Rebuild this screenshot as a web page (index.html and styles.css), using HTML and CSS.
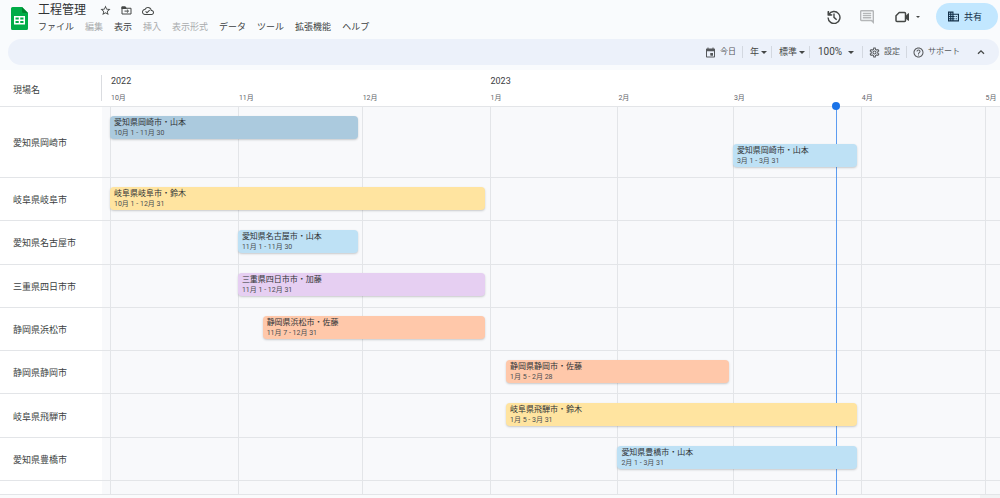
FILE: index.html
```html
<!DOCTYPE html>
<html lang="ja">
<head>
<meta charset="utf-8">
<meta name="viewport" content="width=device-width, initial-scale=1">
<title>工程管理</title>
<link rel="stylesheet" href="styles.css">
</head>
<body>
<header class="header">
  <svg class="logo" viewBox="0 0 17 23" aria-hidden="true">
    <path fill="#00ac47" d="M1.500 0H11l6 6v15.500a1.500 1.500 0 0 1-1.500 1.500h-14A1.500 1.500 0 0 1 0 21.500v-20A1.500 1.500 0 0 1 1.500 0z"/>
    <path fill="#00832d" d="M11 0l6 6h-4.500A1.500 1.500 0 0 1 11 4.500z"/>
    <path fill="#fff" fill-rule="evenodd" d="M3 9h11v8.500H3zM4.500 10.500v2h3.250v-2zM9.250 10.500v2h3.250v-2zM4.500 14v2h3.250v-2zM9.250 14v2h3.250v-2z"/>
  </svg>
  <div class="heading">
    <div class="title-row">
      <h1 class="title">工程管理</h1>
      <button class="icon-button" aria-label="スター"><svg class="icon icon-small" viewBox="1 1 22 22"><path d="M22 9.240l-7.190-.62L12 2 9.190 8.630 2 9.240l5.460 4.730L5.820 21 12 17.270 18.180 21l-1.630-7.030L22 9.240zM12 15.400l-3.760 2.270 1-4.280-3.320-2.880 4.380-.38L12 6.100l1.710 4.040 4.380.38-3.320 2.880 1 4.280L12 15.400z"/></svg></button>
      <button class="icon-button" aria-label="移動"><svg class="icon icon-small" viewBox="1 1 22 22"><path fill="none" stroke="currentColor" stroke-width="2" d="M3 5h6.500l2 2.500H21V19H3zM8 13.200h7.500M12.800 10l3.200 3.200-3.200 3.200"/><path d="M2 4h8l2 3v2H2z"/></svg></button>
      <button class="icon-button" aria-label="保存済み"><svg class="icon icon-cloud" viewBox="0 0 24 24"><path d="M19.350 10.040C18.670 6.590 15.640 4 12 4 9.110 4 6.600 5.640 5.350 8.040 2.340 8.360 0 10.910 0 14c0 3.310 2.690 6 6 6h13c2.760 0 5-2.240 5-5 0-2.640-2.050-4.780-4.650-4.960zM19 18H6c-2.210 0-4-1.790-4-4 0-2.050 1.530-3.760 3.560-3.970l1.070-.11.5-.95C8.080 7.140 9.940 6 12 6c2.620 0 4.880 1.860 5.390 4.430l.3 1.500 1.530.11c1.560.1 2.780 1.410 2.780 2.960 0 1.650-1.350 3-3 3zm-9-3.820l-2.090-2.090L6.500 13.500 10 17l6.010-6.010-1.410-1.410z"/></svg></button>
    </div>
    <nav class="menu">
      <button>ファイル</button>
      <button disabled>編集</button>
      <button>表示</button>
      <button disabled>挿入</button>
      <button disabled>表示形式</button>
      <button>データ</button>
      <button>ツール</button>
      <button>拡張機能</button>
      <button>ヘルプ</button>
    </nav>
  </div>
  <div class="actions">
    <button class="icon-button" aria-label="変更履歴"><svg class="icon icon-large" viewBox="2 2 20 20"><path fill="none" stroke="currentColor" stroke-width="2" d="M4 3.500V9h5.500M4.600 8.500A8.500 8.500 0 1 1 3.500 12.800M12 7v5.500l3.800 3.500"/><path d="M3 4l6 6H3z"/></svg></button>
    <button class="icon-button muted" aria-label="コメント"><svg class="icon icon-large" viewBox="2 2 20 20"><path d="M21.990 4c0-1.100-.89-2-1.990-2H4c-1.100 0-2 .9-2 2v12c0 1.100.9 2 2 2h14l4 4-.01-18zM20 4v13.170L18.830 16H4V4h16zM6 12h12v2H6zm0-3h12v2H6zm0-3h12v2H6z"/></svg></button>
    <button class="meet" aria-label="ビデオ会議"><svg class="icon icon-large" viewBox="0 0 28 28"><path fill="none" stroke="currentColor" stroke-width="3" stroke-linejoin="round" d="M8.500 5H19a2 2 0 0 1 2 2v14a2 2 0 0 1-2 2H4a2 2 0 0 1-2-2v-9.500z"/><path d="M20 13l6.500-6.500H28v15h-1.500L20 16z"/></svg><span class="caret caret-small"></span></button>
    <button class="share"><svg class="icon icon-share" viewBox="2 2 20 20"><path d="M12 7V3H2v18h20V7H12zM6 19H4v-2h2v2zm0-4H4v-2h2v2zm0-4H4V9h2v2zm0-4H4V5h2v2zm4 12H8v-2h2v2zm0-4H8v-2h2v2zm0-4H8V9h2v2zm0-4H8V5h2v2zm10 12h-8v-2h2v-2h-2v-2h2v-2h-2V9h8v10zm-2-8h-2v2h2v-2zm0 4h-2v2h2v-2z"/></svg>共有</button>
  </div>
</header>

<div class="toolbar" role="toolbar" aria-label="タイムライン">
  <button class="tool"><svg class="icon icon-tool" viewBox="1 0 22 22"><path fill-rule="evenodd" d="M19 3h-1V1h-2v2H8V1H6v2H5c-1.110 0-1.990.9-1.990 2L3 19c0 1.100.89 2 2 2h14c1.100 0 2-.9 2-2V5c0-1.100-.9-2-2-2zM5 8.500h14V19H5zM12 12h5v5h-5z"/><path d="M12 12h5v5h-5z"/></svg>今日</button>
  <label class="picker"><select aria-label="期間"><option>年</option><option>月</option><option>週</option></select><span class="caret"></span></label>
  <label class="picker"><select aria-label="表示密度"><option>標準</option></select><span class="caret"></span></label>
  <label class="picker zoom"><select aria-label="ズーム"><option>100%</option><option>75%</option></select><span class="caret"></span></label>
  <button class="tool"><svg class="icon icon-tool" viewBox="1 1 22 22"><path d="M19.430 12.980c.04-.32.07-.64.07-.98 0-.34-.03-.66-.07-.98l2.110-1.650c.19-.15.24-.42.12-.64l-2-3.460c-.09-.16-.26-.25-.44-.25-.06 0-.12.01-.17.03l-2.490 1c-.52-.4-1.080-.73-1.690-.98l-.38-2.650C14.460 2.180 14.250 2 14 2h-4c-.25 0-.46.18-.49.42l-.38 2.650c-.61.25-1.170.59-1.690.98l-2.490-1c-.06-.02-.12-.03-.18-.03-.17 0-.34.09-.43.25l-2 3.460c-.13.22-.07.49.12.64l2.110 1.650c-.04.32-.07.65-.07.98 0 .33.03.66.07.98l-2.110 1.650c-.19.15-.24.42-.12.64l2 3.460c.09.16.26.25.44.25.06 0 .12-.01.17-.03l2.490-1c.52.4 1.080.73 1.690.98l.38 2.650c.03.24.24.42.49.42h4c.25 0 .46-.18.49-.42l.38-2.650c.61-.25 1.170-.59 1.690-.98l2.490 1c.06.02.12.03.18.03.17 0 .34-.09.43-.25l2-3.460c.12-.22.07-.49-.12-.64l-2.110-1.650zm-1.980-1.710c.04.31.05.52.05.73 0 .21-.02.43-.05.73l-.14 1.130.89.7 1.080.84-.7 1.210-1.270-.51-1.040-.42-.9.68c-.43.32-.84.56-1.250.73l-1.060.43-.16 1.130-.2 1.350h-1.400l-.19-1.350-.16-1.130-1.060-.43c-.43-.18-.83-.41-1.230-.71l-.91-.7-1.060.43-1.270.51-.7-1.210 1.080-.84.89-.7-.14-1.130c-.03-.31-.05-.54-.05-.74s.02-.43.05-.73l.14-1.130-.89-.7-1.080-.84.7-1.210 1.270.51 1.040.42.9-.68c.43-.32.84-.56 1.250-.73l1.060-.43.16-1.130.2-1.350h1.390l.19 1.350.16 1.130 1.060.43c.43.18.83.41 1.230.71l.91.7 1.060-.43 1.270-.51.7 1.210-1.070.85-.89.7.14 1.130zM12 8c-2.210 0-4 1.790-4 4s1.790 4 4 4 4-1.790 4-4-1.790-4-4-4zm0 6c-1.100 0-2-.9-2-2s.9-2 2-2 2 .9 2 2-.9 2-2 2z"/></svg>設定</button>
  <button class="tool"><svg class="icon icon-tool" viewBox="1 1 22 22"><path d="M11 18h2v-2h-2v2zm1-16C6.480 2 2 6.480 2 12s4.480 10 10 10 10-4.480 10-10S17.520 2 12 2zm0 18c-4.410 0-8-3.590-8-8s3.590-8 8-8 8 3.590 8 8-3.590 8-8 8zm0-14c-2.210 0-4 1.790-4 4h2c0-1.100.9-2 2-2s2 .9 2 2c0 2-3 1.750-3 5h2c0-2.250 3-2.500 3-5 0-2.210-1.790-4-4-4z"/></svg>サポート</button>
  <button class="collapse" aria-label="閉じる"><svg class="icon icon-chevron" viewBox="0 0 10 10"><path fill="none" stroke="currentColor" stroke-width="1.300" d="M2 6.800l3-3 3 3"/></svg></button>
</div>

<main class="board">
  <div class="scale">
    <div class="corner">現場名</div>
    <div class="days">
      <span class="year" style="grid-column-start:1">2022</span>
      <span class="year" style="grid-column-start:93">2023</span>
      <span class="month" style="grid-column-start:1">10月</span>
      <span class="month" style="grid-column-start:32">11月</span>
      <span class="month" style="grid-column-start:62">12月</span>
      <span class="month" style="grid-column-start:93">1月</span>
      <span class="month" style="grid-column-start:124">2月</span>
      <span class="month" style="grid-column-start:152">3月</span>
      <span class="month" style="grid-column-start:183">4月</span>
      <span class="month" style="grid-column-start:213">5月</span>
    </div>
  </div>
  <div class="rows">
    <div class="lines days" aria-hidden="true">
      <i style="grid-column-start:1"></i>
      <i style="grid-column-start:32"></i>
      <i style="grid-column-start:62"></i>
      <i style="grid-column-start:93"></i>
      <i style="grid-column-start:124"></i>
      <i style="grid-column-start:152"></i>
      <i style="grid-column-start:183"></i>
      <i style="grid-column-start:213"></i>
      <b class="today" style="grid-column-start:177"></b>
    </div>
    <section class="row row-double">
      <h2 class="place">愛知県岡崎市</h2>
      <div class="days">
        <article class="bar steel" style="grid-column:1/61"><strong>愛知県岡崎市・山本</strong><small>10月 1 - 11月 30</small></article>
        <article class="bar sky" style="grid-column:152/182"><strong>愛知県岡崎市・山本</strong><small>3月 1 - 3月 31</small></article>
      </div>
    </section>
    <section class="row">
      <h2 class="place">岐阜県岐阜市</h2>
      <div class="days"><article class="bar yellow" style="grid-column:1/92"><strong>岐阜県岐阜市・鈴木</strong><small>10月 1 - 12月 31</small></article></div>
    </section>
    <section class="row">
      <h2 class="place">愛知県名古屋市</h2>
      <div class="days"><article class="bar sky" style="grid-column:32/61"><strong>愛知県名古屋市・山本</strong><small>11月 1 - 11月 30</small></article></div>
    </section>
    <section class="row">
      <h2 class="place">三重県四日市市</h2>
      <div class="days"><article class="bar purple" style="grid-column:32/92"><strong>三重県四日市市・加藤</strong><small>11月 1 - 12月 31</small></article></div>
    </section>
    <section class="row">
      <h2 class="place">静岡県浜松市</h2>
      <div class="days"><article class="bar orange" style="grid-column:38/92"><strong>静岡県浜松市・佐藤</strong><small>11月 7 - 12月 31</small></article></div>
    </section>
    <section class="row">
      <h2 class="place">静岡県静岡市</h2>
      <div class="days"><article class="bar orange" style="grid-column:97/151"><strong>静岡県静岡市・佐藤</strong><small>1月 5 - 2月 28</small></article></div>
    </section>
    <section class="row">
      <h2 class="place">岐阜県飛騨市</h2>
      <div class="days"><article class="bar yellow" style="grid-column:97/182"><strong>岐阜県飛騨市・鈴木</strong><small>1月 5 - 3月 31</small></article></div>
    </section>
    <section class="row">
      <h2 class="place">愛知県豊橋市</h2>
      <div class="days"><article class="bar sky" style="grid-column:124/182"><strong>愛知県豊橋市・山本</strong><small>2月 1 - 3月 31</small></article></div>
    </section>
    <div class="row row-empty"><div class="place"></div></div>
  </div>
  <div class="scroll-strip"><span class="scroll-corner"></span></div>
</main>
</body>
</html>
```
FILE: styles.css
```css
* {
  box-sizing: border-box;
}

body {
  display: flex;
  flex-direction: column;
  min-height: 100vh;
  margin: 0;
  overflow-x: hidden;
  background: #f9fbfd;
  color: #444746;
  font-family: Roboto, "Noto Sans CJK JP", sans-serif;
  font-size: 9px;
  line-height: 12px;
}

button,
select {
  appearance: none;
  margin: 0;
  padding: 0;
  border: 0;
  background: none;
  color: inherit;
  font: inherit;
  white-space: nowrap;
}

.icon {
  display: block;
  flex: none;
  fill: currentColor;
}

.icon-small { width: 11px; height: 11px; }
.icon-cloud { width: 12px; height: 12px; }
.icon-large { width: 14px; height: 14px; }
.icon-share { width: 11px; height: 11px; }
.icon-tool { width: 11px; height: 11px; }
.icon-chevron { width: 10px; height: 10px; }

.caret {
  border: 3px solid transparent;
  border-top-color: #444746;
  border-bottom: 0;
}

.caret-small {
  border-width: 2px 2px 0;
}

/* Header */
.header {
  display: flex;
  align-items: flex-start;
  height: 39px;
  padding: 0 2px 0 11px;
}

.logo {
  flex: none;
  width: 17px;
  height: 23px;
  margin-top: 7px;
}

.heading {
  margin-left: 10px;
}

.title-row {
  display: flex;
  align-items: center;
  gap: 10px;
  height: 20px;
}

.title {
  margin: 0 4px 0 0;
  color: #303234;
  font-size: 12px;
  font-weight: 400;
  line-height: 20px;
}

.icon-button {
  padding-top: 1px;
}

.menu {
  display: flex;
  gap: 11px;
  line-height: 15px;
  color: #3c3f42;
}

.menu button:disabled {
  color: #a9abad;
}

.actions {
  display: flex;
  align-items: center;
  margin: 3px 0 0 auto;
}

.actions .icon-button {
  margin-right: 19px;
  padding: 0;
}

.muted {
  color: #b4b6b8;
}

.meet {
  display: flex;
  align-items: center;
  gap: 7px;
  margin: 0 16px 0 2px;
}

.share {
  display: flex;
  align-items: center;
  gap: 5px;
  width: 62px;
  height: 27px;
  padding-left: 12px;
  border-radius: 14px;
  background: #c2e7ff;
  color: #133049;
}

/* Toolbar */
.toolbar {
  display: flex;
  align-items: center;
  justify-content: flex-end;
  height: 26px;
  margin: 0 1px 5px 8px;
  padding-right: 13px;
  border-radius: 13px;
  background: #ecf1fa;
}

.tool {
  display: flex;
  align-items: center;
  gap: 4px;
  padding: 0 6px;
  color: #55585b;
  font-size: 8px;
}

.picker {
  display: flex;
  align-items: center;
  gap: 1px;
  padding: 0 4px 0 7px;
}

.picker,
.picker + .tool,
.tool + .tool {
  border-left: 1px solid #d3d8e0;
}

.zoom {
  gap: 5px;
  padding: 0 8px;
  font-size: 10px;
}

.collapse {
  margin-left: 10px;
}

/* Timeline */
.board {
  display: flex;
  flex: 1;
  flex-direction: column;
}

.scale,
.row {
  display: grid;
  grid-template-columns: 102px minmax(0, 1fr);
  border-bottom: 1px solid #e3e5e8;
}

.scale {
  min-height: 37px;
  background: #fff;
}

.corner {
  align-self: center;
  padding: 9px 0 5px 13px;
  border-right: 1px solid #dadce0;
  color: #3c3f42;
}

/* One column per day, 1 October to 4 May */
.days {
  display: grid;
  grid-template-columns: repeat(216, minmax(0, 1fr));
  margin: 0 -1px 0 8px;
}

.scale .days {
  grid-template-rows: 22px 12px;
  align-items: center;
}

.year,
.month {
  width: max-content;
  padding-left: 1px;
  white-space: nowrap;
}

.year {
  grid-row: 1;
  color: #3c4043;
}

.month {
  grid-row: 2;
  color: #5f6368;
  font-size: 7px;
}

.rows {
  position: relative;
  display: flex;
  flex: 1;
  flex-direction: column;
  background: #f8f9fb;
}

.lines {
  position: absolute;
  inset: 0 0 0 102px;
}

.lines i {
  grid-row: 1;
  width: 1px;
  background: #e3e5e8;
}

.today {
  position: relative;
  grid-row: 1;
  width: 1px;
  background: #5c9cf0;
}

.today::before {
  position: absolute;
  top: -5px;
  left: -4px;
  width: 8px;
  height: 8px;
  border-radius: 50%;
  background: #1a73e8;
  content: "";
}

.row {
  flex: 1 0 43px;
}

.row-double {
  flex: none;
  min-height: 71px;
}

.row-empty {
  flex: none;
  height: 14px;
}

.place {
  display: flex;
  align-items: center;
  margin: 0;
  padding: 2px 0 0 13px;
  background: #fff;
  color: #3c3f42;
  font-size: 9px;
  font-weight: 400;
}

.row .days {
  align-content: center;
  row-gap: 5px;
  padding-bottom: 2px;
}

.bar {
  position: relative;
  display: flex;
  flex-direction: column;
  height: 23px;
  padding: 1px 4px;
  border-radius: 4px;
  box-shadow: 0 1px 2px rgba(60, 64, 67, 0.25);
  white-space: nowrap;
}

.bar strong {
  color: #303336;
  font-size: 8px;
  font-weight: 400;
  line-height: 11px;
}

.bar small {
  color: #4a4d50;
  font-size: 7px;
  line-height: 10px;
}

.steel { background: #abcade; }
.sky { background: #bee1f5; }
.yellow { background: #ffe4a0; }
.purple { background: #e6cff2; }
.orange { background: #ffc8aa; }

.row-double .bar + .bar {
  grid-row: 2;
}

.scroll-strip {
  display: flex;
  justify-content: flex-end;
  height: 3px;
  background: #fafbfc;
}

.scroll-corner {
  width: 20px;
  background: #f1f3f4;
}
```
